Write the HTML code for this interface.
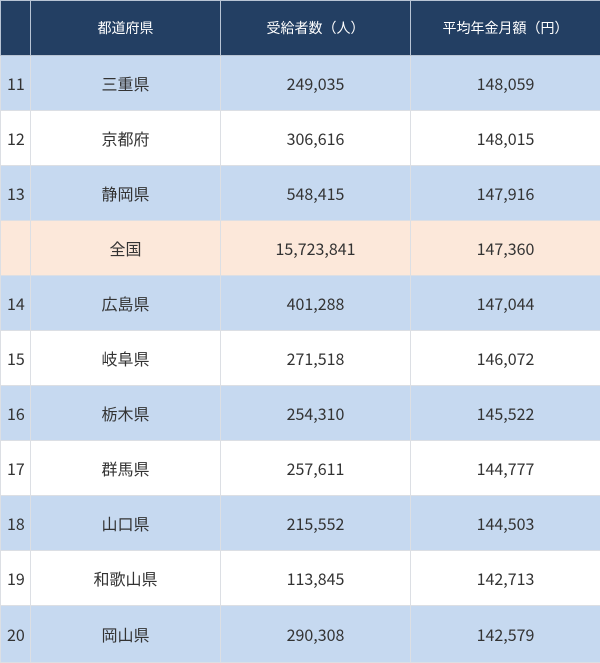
<!DOCTYPE html>
<html><head><meta charset="utf-8"><style>
body{margin:0;width:600px;height:662px;overflow:hidden;background:#fff;font-family:"Noto Sans CJK JP",sans-serif;}
table{border-collapse:collapse;width:600px;table-layout:fixed;}
td,th{height:54px;border:1px solid #dcdfe4;padding:0;font-size:16px;line-height:20px;color:#333;text-align:center;font-weight:normal;vertical-align:middle;}
th{background:#233f63;color:#fff;border-color:#b8c4d4;font-size:14px;}
td:first-child{text-align:left;padding-left:6px;}
tr.b td{background:#c6d9f0;}
tr.o td{background:#fce8da;}
tr.last td{height:56px;}
</style></head><body>
<table>
<colgroup><col style="width:30px"><col style="width:190px"><col style="width:190px"><col style="width:190px"></colgroup>
<tr><th></th><th>都道府県</th><th>受給者数（人）</th><th>平均年金月額（円）</th></tr>
<tr class="b"><td>11</td><td>三重県</td><td>249,035</td><td>148,059</td></tr>
<tr><td>12</td><td>京都府</td><td>306,616</td><td>148,015</td></tr>
<tr class="b"><td>13</td><td>静岡県</td><td>548,415</td><td>147,916</td></tr>
<tr class="o"><td></td><td>全国</td><td>15,723,841</td><td>147,360</td></tr>
<tr class="b"><td>14</td><td>広島県</td><td>401,288</td><td>147,044</td></tr>
<tr><td>15</td><td>岐阜県</td><td>271,518</td><td>146,072</td></tr>
<tr class="b"><td>16</td><td>栃木県</td><td>254,310</td><td>145,522</td></tr>
<tr><td>17</td><td>群馬県</td><td>257,611</td><td>144,777</td></tr>
<tr class="b"><td>18</td><td>山口県</td><td>215,552</td><td>144,503</td></tr>
<tr><td>19</td><td>和歌山県</td><td>113,845</td><td>142,713</td></tr>
<tr class="b last"><td>20</td><td>岡山県</td><td>290,308</td><td>142,579</td></tr>
</table>
</body></html>
